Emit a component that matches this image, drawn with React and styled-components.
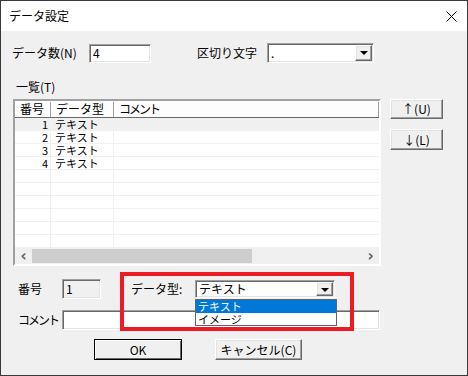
import React from "react";
import styled, { createGlobalStyle, css } from "styled-components";

const GlobalStyle = createGlobalStyle`
  html, body { margin: 0; padding: 0; background: #fff; }
  body {
    font-family: "Noto Sans CJK JP", "Liberation Sans", sans-serif;
    font-size: 12px;
    color: #000;
  }
  * { box-sizing: border-box; }
`;

const rows = [
  { no: 1, type: "テキスト" },
  { no: 2, type: "テキスト" },
  { no: 3, type: "テキスト" },
  { no: 4, type: "テキスト" },
  {}, {}, {}, {}, {}, {},
];

const sunken = css`
  border: 1px solid;
  border-color: #a0a0a0 #fff #fff #a0a0a0;
  box-shadow: inset 1px 1px 0 #696969, inset -1px -1px 0 #e3e3e3;
`;

const raised = css`
  border: 1px solid;
  border-color: #fff #696969 #696969 #fff;
  box-shadow: inset -1px -1px 0 #a0a0a0, inset 1px 1px 0 #e3e3e3;
  background: #f0f0f0;
`;

export default function App() {
  return (
    <>
      <GlobalStyle />
      <Window>
        <TitleBar>
          <Title>データ設定</Title>
          <Close viewBox="0 0 11 11" width="11" height="11">
            <path d="M0.5 0.5 L10.5 10.5 M10.5 0.5 L0.5 10.5" stroke="#000" strokeWidth="1" />
          </Close>
        </TitleBar>
        <Body>
          <Row $top={12}>
            <Label $w={77}>データ数(N)</Label>
            <TextBox $w={62} $h={19}>4</TextBox>
            <Label $w={70} $ml={46}>区切り文字</Label>
            <Combo $w={107} $h={20}>
              <span>.</span>
              <DropButton />
            </Combo>
          </Row>
          <Caption>一覧(T)</Caption>
          <Row $top={5} $align="flex-start">
            <ListView>
              <Header>
                <HeaderCell $w={36}>番号</HeaderCell>
                <HeaderCell $w={63}>データ型</HeaderCell>
                <HeaderCell $grow $tight>コメント</HeaderCell>
              </Header>
              <Rows>
                {rows.map((r, i) => (
                  <ListRow key={i} $selected={i === 0}>
                    <NumCell>{r.no}</NumCell>
                    <TypeCell>{r.type}</TypeCell>
                    <CommentCell />
                  </ListRow>
                ))}
              </Rows>
              <ScrollBar>
                <Arrow>‹</Arrow>
                <Track>
                  <Thumb />
                </Track>
                <Arrow>›</Arrow>
              </ScrollBar>
            </ListView>
            <SideButtons>
              <Button $w={53} $h={20}>↑(U)</Button>
              <Button $w={53} $h={21}>↓(L)</Button>
            </SideButtons>
          </Row>
          <Row $top={13}>
            <Label $w={50} $pl={6}>番号</Label>
            <TextBox $w={39} $h={20} $disabled>1</TextBox>
            <Label $w={64} $ml={30}>データ型:</Label>
            <ComboWrap>
              <Combo $w={140} $h={18}>
                <span>テキスト</span>
                <DropButton />
              </Combo>
              <Popup>
                <PopupItem $active>テキスト</PopupItem>
                <PopupItem>イメージ</PopupItem>
              </Popup>
            </ComboWrap>
          </Row>
          <Row $top={11}>
            <Label $w={50} $pl={6} $tight>コメント</Label>
            <TextBox $w={318} $h={20} />
          </Row>
          <Row $top={9} $pl={82}>
            <Button $w={88} $h={21} $default>OK</Button>
            <Button $w={87} $h={21} $ml={33}>キャンセル(C)</Button>
          </Row>
          <Highlight />
        </Body>
      </Window>
    </>
  );
}

const Window = styled.div`
  width: 468px;
  height: 376px;
  border: 1px solid #3a3a3a;
  display: flex;
  flex-direction: column;
  overflow: hidden;
`;

const TitleBar = styled.div`
  height: 30px;
  background: #fff;
  display: flex;
  align-items: center;
  justify-content: space-between;
  padding: 0 10px 0 8px;
`;

const Title = styled.div`
  font-size: 12px;
  line-height: 14px;
`;

const Close = styled.svg`
  display: block;
`;

const Body = styled.div`
  flex: 1;
  background: #f0f0f0;
  position: relative;
  display: flex;
  flex-direction: column;
  padding-left: 11px;
`;

const Row = styled.div`
  display: flex;
  align-items: ${(p) => p.$align || "center"};
  margin-top: ${(p) => p.$top || 0}px;
  padding-left: ${(p) => p.$pl || 0}px;
`;

const Label = styled.div`
  width: ${(p) => p.$w}px;
  margin-left: ${(p) => p.$ml || 0}px;
  padding-left: ${(p) => p.$pl || 0}px;
  line-height: 14px;
  white-space: nowrap;
  letter-spacing: ${(p) => (p.$tight ? "-2px" : "0")};
`;

const Caption = styled.div`
  margin: 17px 0 0 4px;
  line-height: 14px;
`;

const TextBox = styled.div`
  ${sunken};
  width: ${(p) => p.$w}px;
  height: ${(p) => p.$h}px;
  background: ${(p) => (p.$disabled ? "#f0f0f0" : "#fff")};
  padding: 0 3px;
  line-height: ${(p) => p.$h - 3}px;
`;

const Combo = styled.div`
  ${sunken};
  width: ${(p) => p.$w}px;
  height: ${(p) => p.$h}px;
  background: #fff;
  display: flex;
  align-items: center;
  justify-content: space-between;
  padding: 0 1px 0 3px;
  line-height: 14px;
`;

const DropButton = styled.div`
  ${raised};
  width: 17px;
  align-self: stretch;
  margin: 1px 0;
  position: relative;
  &::after {
    content: "";
    position: absolute;
    left: 4px;
    top: 5px;
    border-left: 4px solid transparent;
    border-right: 4px solid transparent;
    border-top: 4px solid #000;
  }
`;

const ComboWrap = styled.div`
  position: relative;
  z-index: 2;
`;

const Popup = styled.div`
  position: absolute;
  left: 0;
  top: 100%;
  margin-top: 1px;
  width: 142px;
  height: 27px;
  background: #fff;
  border: 1px solid #646464;
`;

const PopupItem = styled.div`
  height: 12.5px;
  line-height: 12.5px;
  font-size: 11px;
  padding-left: 2px;
  background: ${(p) => (p.$active ? "#0078d7" : "transparent")};
  color: ${(p) => (p.$active ? "#fff" : "#000")};
`;

const ListView = styled.div`
  width: 368px;
  height: 167px;
  margin-left: 1px;
  border: 2px solid;
  border-color: #a0a0a0 #fff #fff #a0a0a0;
  box-shadow: inset 1px 1px 0 #696969;
  background: #fff;
  display: flex;
  flex-direction: column;
`;

const Header = styled.div`
  height: 17px;
  display: flex;
  flex: none;
  background: #fdfdfd;
  border-bottom: 1px solid #696969;
  padding-top: 1px;
`;

const HeaderCell = styled.div`
  width: ${(p) => (p.$grow ? "auto" : `${p.$w}px`)};
  flex: ${(p) => (p.$grow ? 1 : "none")};
  border-right: 1px solid #a0a0a0;
  box-shadow: inset 1px 1px 0 #fff;
  padding-left: 5px;
  line-height: 14px;
  letter-spacing: ${(p) => (p.$tight ? "-2px" : "0")};
`;

const Rows = styled.div`
  flex: 1;
`;

const ListRow = styled.div`
  height: 13px;
  display: flex;
  background: ${(p) => (p.$selected ? "#f0f0f0" : "#fff")};
  box-shadow: inset 0 -1px 0 #f0f0f0;
  font-size: 11px;
  line-height: 13px;
`;

const NumCell = styled.div`
  width: 36px;
  text-align: right;
  padding-right: 3px;
  box-shadow: inset -1px 0 0 #f0f0f0;
`;

const TypeCell = styled.div`
  width: 63px;
  padding-left: 4px;
  box-shadow: inset -1px 0 0 #f0f0f0;
`;

const CommentCell = styled.div`
  flex: 1;
`;

const ScrollBar = styled.div`
  height: 16px;
  flex: none;
  display: flex;
  background: #f0f0f0;
`;

const Arrow = styled.div`
  width: 17px;
  display: flex;
  align-items: center;
  justify-content: center;
  font-family: "DejaVu Sans", sans-serif;
  font-size: 15px;
  font-weight: bold;
  color: #606060;
  line-height: 16px;
`;

const Track = styled.div`
  flex: 1;
  padding: 1px 0;
`;

const Thumb = styled.div`
  width: 220px;
  height: 100%;
  background: #cdcdcd;
`;

const SideButtons = styled.div`
  display: flex;
  flex-direction: column;
  gap: 10px;
  margin-left: 9px;
`;

const Button = styled.div`
  ${raised};
  width: ${(p) => p.$w}px;
  height: ${(p) => p.$h}px;
  margin-left: ${(p) => p.$ml || 0}px;
  display: flex;
  align-items: center;
  justify-content: center;
  line-height: 14px;
  ${(p) =>
    p.$default &&
    css`
      border-color: #000;
      box-shadow: inset 1px 1px 0 #fff, inset -1px -1px 0 #696969;
    `}
`;

const Highlight = styled.div`
  position: absolute;
  left: 119px;
  top: 241px;
  width: 234px;
  height: 59px;
  border: 4px solid #ed1c24;
  z-index: 1;
  pointer-events: none;
`;
